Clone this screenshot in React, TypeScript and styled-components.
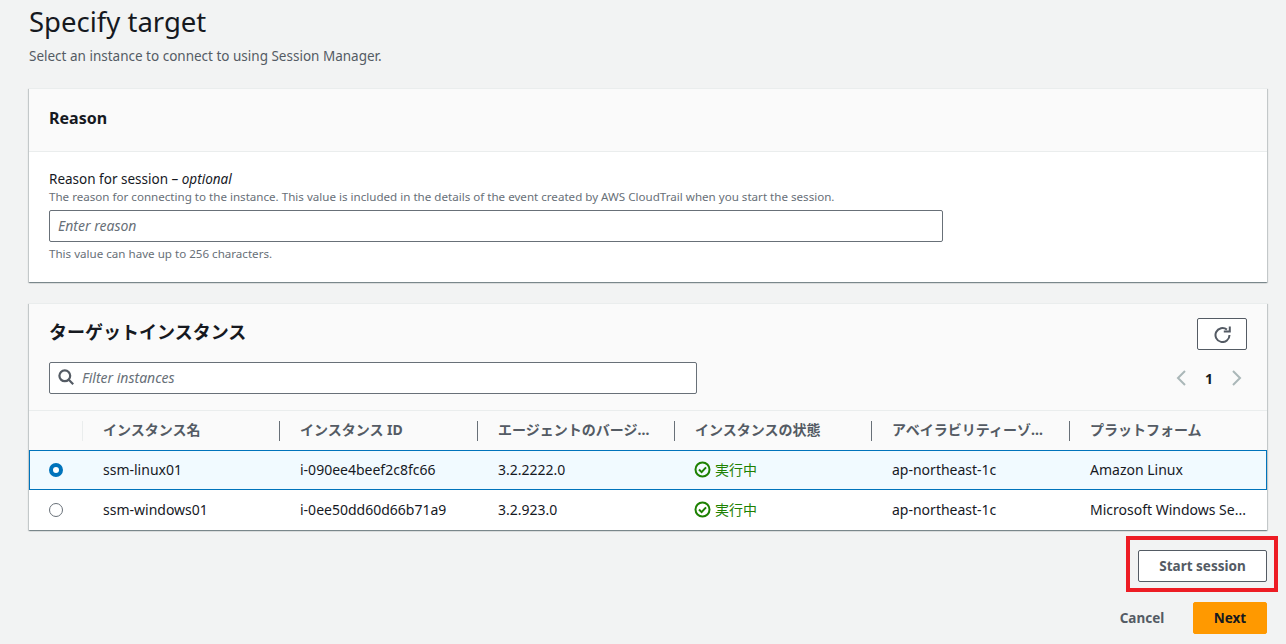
import React from 'react'
import styled, { createGlobalStyle } from 'styled-components'

const FONT = `"Noto Sans", "Noto Sans CJK JP", sans-serif`

const GlobalStyle = createGlobalStyle`
  html, body {
    margin: 0;
    padding: 0;
    height: 644px;
    overflow: hidden;
    background: #f2f3f3;
    font-family: ${FONT};
    color: #16191f;
  }
  * {
    box-sizing: border-box;
  }
`

const Page = styled.div`
  padding: 3px 19px 0 29px;
`

const Title = styled.h1`
  margin: 0;
  font-size: 27.5px;
  line-height: 38px;
  font-weight: 400;
`

const SubTitle = styled.p`
  margin: 5px 0 0;
  font-size: 13.5px;
  line-height: 20px;
  color: #545b64;
`

const Card = styled.section`
  margin-top: ${(p: { $top: number }) => p.$top}px;
  background: #fff;
  border-top: 1px solid #eaeded;
  box-shadow: 0 1px 1px 0 rgba(0, 28, 36, 0.3), 1px 1px 1px 0 rgba(0, 28, 36, 0.15),
    -1px 1px 1px 0 rgba(0, 28, 36, 0.15);
`

const CardHeader = styled.div`
  height: 63px;
  padding: 0 20px 5px;
  display: flex;
  align-items: center;
  background: #fafafa;
  border-bottom: 1px solid #eaeded;
`

const CardTitle = styled.h2`
  margin: 0;
  font-size: 16px;
  font-weight: 700;
  line-height: 22px;
`

const CardBody = styled.div`
  height: 130px;
  padding: 17px 20px 0;
`

const Label = styled.div`
  font-size: 13.5px;
  line-height: 20px;
  em {
    font-style: italic;
  }
`

const Hint = styled.div`
  font-size: 11.6px;
  line-height: 16px;
  color: #687078;
`

const Field = styled.div`
  height: 32px;
  width: ${(p: { $width: number }) => p.$width}px;
  display: flex;
  align-items: center;
  gap: 8px;
  padding: 0 8px 2px;
  background: #fff;
  border: 1px solid #687078;
  border-radius: 2px;
  font-size: 14px;
  font-style: italic;
  color: #687078;
`

const ReasonField = styled(Field)`
  margin: 5px 0 4px;
`

const TableTop = styled.div`
  height: 107px;
  padding: 14px 20px 0;
  display: flex;
  flex-direction: column;
  background: #fafafa;
  border-bottom: 1px solid #eaeded;
`

const TopRow = styled.div`
  display: flex;
  align-items: center;
  justify-content: space-between;
`

const FilterRow = styled(TopRow)`
  margin-top: 12px;
`

const TableTitle = styled.h2`
  margin: 0 0 3px;
  font-size: 18px;
  font-weight: 700;
  line-height: 29px;
`

const IconButton = styled.button`
  width: 50px;
  height: 32px;
  display: flex;
  align-items: center;
  justify-content: center;
  padding: 0;
  background: #fff;
  border: 1px solid #545b64;
  border-radius: 2px;
  color: #545b64;
`

const Pager = styled.div`
  display: flex;
  align-items: center;
  margin-right: 2px;
  color: #aab7b8;
  font-size: 14px;
`

const PageNumber = styled.span`
  width: 40px;
  text-align: center;
  font-weight: 700;
  color: #16191f;
`

const Row = styled.div<{ $selected?: boolean }>`
  display: grid;
  grid-template-columns: 53px 197px 198px 197px 197px 198px 1fr;
  align-items: center;
  height: 40px;
  font-size: 14px;
  background: ${(p) => (p.$selected ? '#f1faff' : '#fff')};
  border: ${(p) => (p.$selected ? '1px solid #0073bb' : 'none')};
  ${(p) => (p.$selected ? 'border-left-width: 1px;' : 'padding: 0 1px;')}
`

const HeadRow = styled(Row)`
  height: 39px;
  padding: 0;
  background: #fafafa;
  color: #545b64;
  font-weight: 700;
`

const HeadCell = styled.div<{ $faint?: boolean }>`
  height: 20px;
  padding-left: 20px;
  line-height: 18px;
  white-space: nowrap;
  border-left: 1px solid ${(p) => (p.$faint ? '#eaeded' : '#687078')};
`

const HeadSpacer = styled.div``

const Cell = styled.div`
  padding: 0 0 2px 20px;
  white-space: nowrap;
`

const RadioCell = styled.div`
  padding-left: 19px;
  display: flex;
  align-items: center;
`

const Radio = styled.span<{ $checked?: boolean }>`
  width: 14px;
  height: 14px;
  border-radius: 50%;
  background: #fff;
  border: ${(p) => (p.$checked ? '4px solid #0073bb' : '1px solid #687078')};
`

const Status = styled(Cell)`
  padding-left: 19px;
  display: flex;
  align-items: center;
  gap: 4px;
  color: #1d8102;
`

const Actions = styled.div`
  display: flex;
  flex-direction: column;
  align-items: flex-end;
`

const Highlight = styled.div`
  margin: 6px -11px 0 0;
  padding: 10px 7px 6px 8px;
  border: 4px solid #ed1c24;
`

const Button = styled.button`
  height: 32px;
  padding: 0;
  border-radius: 2px;
  border: 1px solid #545b64;
  background: #fff;
  color: #545b64;
  font-family: ${FONT};
  font-size: 13.5px;
  font-weight: 700;
`

const StartButton = styled(Button)`
  width: 129px;
  display: block;
`

const Footer = styled.div`
  margin-top: 10px;
  display: flex;
  align-items: center;
`

const CancelButton = styled(Button)`
  width: 102px;
  border-color: transparent;
  background: transparent;
`

const NextButton = styled(Button)`
  width: 74px;
  background: #ff9900;
  border-color: #ff9900;
  color: #16191f;
`

const CheckIcon = () => (
  <svg width="17" height="17" viewBox="0 0 17 17" fill="none" stroke="#1d8102" strokeWidth="2">
    <circle cx="8.5" cy="8.5" r="7" />
    <path d="M5 8.5l2.6 2.6L12 6.4" />
  </svg>
)

const RefreshIcon = () => (
  <svg width="17" height="17" viewBox="0 0 17 17" fill="none" stroke="currentColor" strokeWidth="2">
    <path d="M15.5 9a7 7 0 1 1-2.6-5.4" />
    <path d="M9.8 5.6h6V.5" />
  </svg>
)

const SearchIcon = () => (
  <svg width="16" height="16" viewBox="0 0 16 16" fill="none" stroke="#545b64" strokeWidth="2.2">
    <circle cx="6.8" cy="6.8" r="5.4" />
    <path d="M10.8 10.8l4.4 4.4" />
  </svg>
)

const ChevronIcon = ({ flip }: { flip?: boolean }) => (
  <svg width="16" height="16" viewBox="0 0 16 16" fill="none" stroke="currentColor" strokeWidth="2">
    <path d={flip ? 'M4 1l7 7-7 7' : 'M12 1L5 8l7 7'} />
  </svg>
)

const instances = [
  { name: 'ssm-linux01', id: 'i-090ee4beef2c8fc66', agent: '3.2.2222.0', platform: 'Amazon Linux', selected: true },
  { name: 'ssm-windows01', id: 'i-0ee50dd60d66b71a9', agent: '3.2.923.0', platform: 'Microsoft Windows Se...', selected: false },
]

const columns = ['インスタンス名', 'インスタンス ID', 'エージェントのバージ…', 'インスタンスの状態', 'アベイラビリティーゾ…', 'プラットフォーム']

export default function App() {
  return (
    <Page>
      <GlobalStyle />
      <Title>Specify target</Title>
      <SubTitle>Select an instance to connect to using Session Manager.</SubTitle>

      <Card $top={22}>
        <CardHeader>
          <CardTitle>Reason</CardTitle>
        </CardHeader>
        <CardBody>
          <Label>
            Reason for session – <em>optional</em>
          </Label>
          <Hint>
            The reason for connecting to the instance. This value is included in the details of the event created by AWS CloudTrail when you start the session.
          </Hint>
          <ReasonField $width={894}>Enter reason</ReasonField>
          <Hint>This value can have up to 256 characters.</Hint>
        </CardBody>
      </Card>

      <Card $top={21}>
        <TableTop>
          <TopRow>
            <TableTitle>ターゲットインスタンス</TableTitle>
            <IconButton aria-label="refresh">
              <RefreshIcon />
            </IconButton>
          </TopRow>
          <FilterRow>
            <Field $width={648}>
              <SearchIcon />
              Filter instances
            </Field>
            <Pager>
              <ChevronIcon />
              <PageNumber>1</PageNumber>
              <ChevronIcon flip />
            </Pager>
          </FilterRow>
        </TableTop>
        <HeadRow>
          <HeadSpacer />
          {columns.map((c, i) => (
            <HeadCell key={c} $faint={i === 0}>
              {c}
            </HeadCell>
          ))}
        </HeadRow>
        {instances.map((item) => (
          <Row key={item.name} $selected={item.selected}>
            <RadioCell>
              <Radio $checked={item.selected} />
            </RadioCell>
            <Cell>{item.name}</Cell>
            <Cell>{item.id}</Cell>
            <Cell>{item.agent}</Cell>
            <Status>
              <CheckIcon />
              実行中
            </Status>
            <Cell>ap-northeast-1c</Cell>
            <Cell>{item.platform}</Cell>
          </Row>
        ))}
      </Card>

      <Actions>
        <Highlight>
          <StartButton>Start session</StartButton>
        </Highlight>
        <Footer>
          <CancelButton>Cancel</CancelButton>
          <NextButton>Next</NextButton>
        </Footer>
      </Actions>
    </Page>
  )
}
